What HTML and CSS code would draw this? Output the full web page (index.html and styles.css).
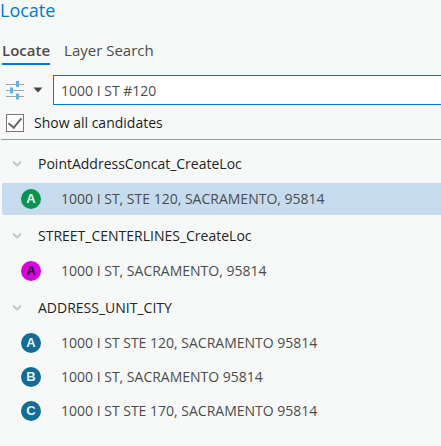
FILE: index.html
```html
<!DOCTYPE html>
<html lang="en">
<head>
<meta charset="utf-8">
<meta name="viewport" content="width=device-width, initial-scale=1">
<title>Locate</title>
<link rel="stylesheet" href="styles.css">
</head>
<body>
<main class="pane">
  <h1 class="title">Locate</h1>
  <nav class="tabs">
    <button type="button" class="tab tab-active">Locate</button>
    <button type="button" class="tab">Layer Search</button>
  </nav>
  <div class="search">
    <button type="button" class="options" aria-label="Locate options">
      <svg width="18" height="20" viewBox="0 0 18 20">
        <path d="M0 4.500h18M0 10.500h18M0 16.500h18" stroke="#a3a3a3" fill="none"/>
        <path d="M11.500 1v6M5.500 7.500v6M11.500 13.500v6" stroke="#64b1e4" stroke-width="3" fill="none"/>
      </svg>
      <svg class="caret" width="10" height="6" viewBox="0 0 10 6"><path d="M0.500 0.500h9L5 5.500z"/></svg>
    </button>
    <input class="query" type="text" aria-label="Search locations" value="1000 I ST #120">
  </div>
  <label class="candidates">
    <input class="check" type="checkbox" checked>
    <span>Show all candidates</span>
  </label>
  <section class="results">
    <h2 class="group"><svg class="chevron" width="10" height="8" viewBox="0 0 10 8"><path d="M1 1.500l4 4 4-4"/></svg>PointAddressConcat_CreateLoc</h2>
    <ul class="list">
      <li class="item item-selected"><span class="pin pin-green">A</span>1000 I ST, STE 120, SACRAMENTO, 95814</li>
    </ul>
    <h2 class="group"><svg class="chevron" width="10" height="8" viewBox="0 0 10 8"><path d="M1 1.500l4 4 4-4"/></svg>STREET_CENTERLINES_CreateLoc</h2>
    <ul class="list">
      <li class="item"><span class="pin pin-magenta">A</span>1000 I ST, SACRAMENTO, 95814</li>
    </ul>
    <h2 class="group"><svg class="chevron" width="10" height="8" viewBox="0 0 10 8"><path d="M1 1.500l4 4 4-4"/></svg>ADDRESS_UNIT_CITY</h2>
    <ul class="list">
      <li class="item"><span class="pin">A</span>1000 I ST STE 120, SACRAMENTO 95814</li>
      <li class="item"><span class="pin">B</span>1000 I ST, SACRAMENTO 95814</li>
      <li class="item"><span class="pin">C</span>1000 I ST STE 170, SACRAMENTO 95814</li>
    </ul>
  </section>
</main>
</body>
</html>
```
FILE: styles.css
```css
* {
  box-sizing: border-box;
}

body {
  margin: 0;
  background: #f7f9f8;
  color: #4c4c4c;
  font: 14px/20px "Open Sans", sans-serif;
}

button,
input {
  margin: 0;
  font: inherit;
  color: inherit;
}

button {
  padding: 0;
  border: 0;
  background: none;
}

.title {
  margin: 0;
  color: #0079c8;
  font-size: 18px;
  font-weight: 400;
  line-height: 20px;
}

.tabs {
  display: flex;
  gap: 14px;
  padding: 20px 2px 10px;
  font-size: 15px;
}

.tab {
  padding-bottom: 3px;
  border-bottom: 2px solid transparent;
}

.tab-active {
  border-color: #0079c8;
  font-weight: 600;
}

.search {
  display: flex;
  gap: 10px;
  padding-left: 6px;
}

.options {
  display: flex;
  align-items: center;
  gap: 9px;
}

.caret {
  fill: #444;
}

.query {
  flex: 1;
  min-width: 0;
  height: 30px;
  padding: 0 7px;
  border: 1px solid #0079c8;
  border-right: 0;
  border-radius: 0;
  background: #fff;
  outline: 0;
}

.candidates {
  display: flex;
  align-items: center;
  gap: 10px;
  margin-left: 1px;
  padding: 8px 5px 6px;
  border-bottom: 1px solid #999;
  color: #1c1c1c;
}

.check {
  appearance: none;
  width: 18px;
  height: 18px;
  border: 1px solid #777;
  background: #fff;
  display: grid;
  place-items: center;
}

.check:checked::before {
  content: "";
  width: 6px;
  height: 11px;
  margin-bottom: 3px;
  border: solid #666;
  border-width: 0 2px 2px 0;
  transform: rotate(40deg);
}

.results {
  padding: 5px 0 0 2px;
}

.group {
  display: flex;
  align-items: center;
  gap: 16px;
  height: 38px;
  margin: 0;
  padding-left: 10px;
  color: #242424;
  font-size: 14px;
  font-weight: 400;
}

.chevron {
  fill: none;
  stroke: #c6c6c6;
  stroke-width: 2;
}

.list {
  margin: 0;
  padding: 0;
  list-style: none;
}

.item {
  display: flex;
  align-items: center;
  gap: 20px;
  height: 32px;
  margin-bottom: 2px;
  padding-left: 19px;
}

.item-selected {
  border-radius: 2px 0 0 2px;
  background: #c6dbee;
}

.pin {
  width: 20px;
  height: 20px;
  border-radius: 50%;
  background: #136b98;
  color: #e6f1f6;
  font: bold 13px/20px "Liberation Sans", sans-serif;
  text-align: center;
}

.pin-green {
  background: #069450;
}

.pin-magenta {
  background: #db00db;
  color: #210021;
}
```
